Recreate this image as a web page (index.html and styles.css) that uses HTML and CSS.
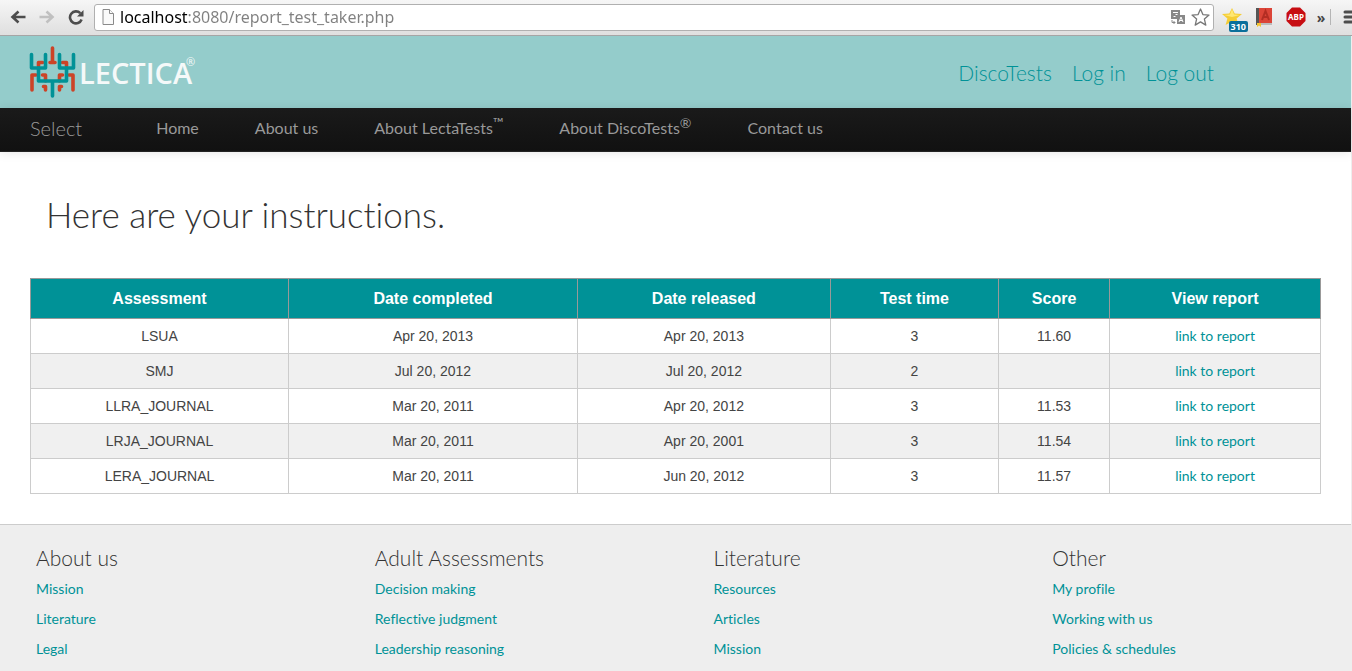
FILE: index.html
```html
<!DOCTYPE html>
<html lang="en">
<head>
  <meta charset="UTF-8" />
  <title>Lectica</title>
  <meta name="viewport" content="width=device-width, initial-scale=1.0" />
  <link rel="stylesheet" href="styles.css">
</head>
<body>
  <div class="toolbar">
    <button class="tool" aria-label="Back">
      <svg width="16" height="16" viewBox="0 0 16 16" fill="none" stroke="#4d4d4d" stroke-width="2.6"><path d="M8.5 2.5L2.5 8l6 5.500M2.500 8H15.500"/></svg>
    </button>
    <button class="tool" aria-label="Forward">
      <svg width="16" height="16" viewBox="0 0 16 16" fill="none" stroke="#c0c0c0" stroke-width="2.6"><path d="M7.500 2.500l6 5.500-6 5.500M13.500 8H.5"/></svg>
    </button>
    <button class="tool" aria-label="Reload">
      <svg width="16" height="16" viewBox="0 0 16 16"><path d="M12.300 4.200A6 6 0 1 0 13.600 10.500" fill="none" stroke="#4d4d4d" stroke-width="2.600"/><path d="M15.500 1v6.500H9z" fill="#4d4d4d"/></svg>
    </button>
    <div class="address">
      <svg width="13" height="16" viewBox="0 0 13 16" fill="#fafafa" stroke="#8a8a8a"><path d="M1 .5h6.500l4 4v11H1z"/><path d="M7.500.5v4h4"/></svg>
      <input type="text" class="url" aria-label="Address" value="localhost:8080/report_test_taker.php">
      <button class="inner" aria-label="Translate">
        <svg width="14" height="14" viewBox="0 0 14 14"><path d="M0 0h9v5H6v4H0z" fill="#888"/><path d="M2 2.500h5M4.500 4.500h2M2.500 6.500h2" stroke="#fff" fill="none"/><path d="M6 5h8v9H6z" fill="#888"/><path d="M8 12l2-5 2 5M8.700 10.500h2.600" stroke="#fff" fill="none"/><path d="M1 10v2.500h3M2.500 11l1.500 1.500L2.500 14" stroke="#888" fill="none"/></svg>
      </button>
      <button class="inner" aria-label="Bookmark">
        <svg width="19" height="18" viewBox="0 0 19 18" fill="#fff" stroke="#777" stroke-width="1.300" stroke-linejoin="round"><path d="M9.500 1l2.400 5.600 6.100.5-4.600 4 1.400 6-5.300-3.200-5.300 3.200 1.400-6-4.600-4 6.100-.5z"/></svg>
      </button>
    </div>
    <button class="ext star" aria-label="Favorites">
      <svg width="20" height="18" viewBox="0 0 20 18"><path d="M10 0l2.700 5.500 7.300.6-5.400 4.500 1.800 6.400L10 13.500 3.600 17l1.800-6.400L0 6.100l7.300-.6z" fill="#f5cd35"/><path d="M10 1l2 5.500 6 .5-8 2-8-2 6-.5z" fill="#ffe773"/></svg>
      <span class="badge">310</span>
    </button>
    <button class="ext" aria-label="Dictionary">
      <svg width="18" height="20" viewBox="0 0 18 20"><path d="M1 1h3v17H1z" fill="#555"/><path d="M4 1h13v15H4z" fill="#db4437"/><path d="M4 16h13v2H4z" fill="#bbb"/><path d="M7 13l3.500-9L14 13M8.200 10h4.600" fill="none" stroke="#b32d23" stroke-width="2"/><path d="M2 16h4v4l-2-1.500L2 20z" fill="#f3c431"/></svg>
    </button>
    <button class="ext" aria-label="AdBlock Plus">
      <svg width="20" height="20" viewBox="0 0 20 20"><path d="M6 .5h8L19.500 6v8L14 19.500H6L.5 14V6z" fill="#c70d12"/><text x="10" y="13" text-anchor="middle" class="abp">ABP</text></svg>
    </button>
    <button class="ext more" aria-label="More extensions">»</button>
    <button class="menu" aria-label="Menu">
      <svg width="16" height="14" viewBox="0 0 16 14" stroke="#4d4d4d" stroke-width="3" stroke-linecap="round"><path d="M2 2h12M2 7h12M2 12h12"/></svg>
    </button>
  </div>

  <div class="page">
    <header class="header">
      <a href="#" class="logo" aria-label="Lectica home">
        <svg width="168" height="54" viewBox="0 0 168 54" fill="none" stroke-width="3.600" stroke-linecap="round" stroke-linejoin="round">
          <g stroke="#cc4327">
            <path d="M23.500 3v14M21 17.500h5"/>
            <path d="M9.500 21v-3.500h4M37.500 21v-3.500h-4"/>
            <path d="M3 45V30h4M44 45V30h-4"/>
            <path d="M13.500 30h3v6M33.500 30h-3v6"/>
            <path d="M16.500 45v-3.500h-2M30.500 45v-3.500h2"/>
          </g>
          <g stroke="#009297">
            <path d="M2.500 9.500v13.500h14V9.500"/>
            <path d="M44.500 9.500v13.500h-14V9.500"/>
            <path d="M9.500 23v13h28V23M23.500 36v15"/>
          </g>
          <text x="50" y="39" class="logo-text">LECTICA</text>
          <text x="157" y="21" class="logo-mark">®</text>
        </svg>
      </a>
      <div class="account">
        <a href="#">DiscoTests</a>
        <a href="#">Log in</a>
        <a href="#">Log out</a>
      </div>
    </header>

    <nav class="nav">
      <a href="#" class="brand">Select</a>
      <a href="#">Home</a>
      <a href="#">About us</a>
      <a href="#">About LectaTests<sup>™</sup></a>
      <a href="#">About DiscoTests<sup>®</sup></a>
      <a href="#">Contact us</a>
    </nav>

    <main class="main">
      <h1>Here are your instructions.</h1>
      <table class="report">
        <colgroup>
          <col class="c-name"><col class="c-completed"><col class="c-released"><col class="c-time"><col class="c-score"><col class="c-view">
        </colgroup>
        <thead>
          <tr><th>Assessment</th><th>Date completed</th><th>Date released</th><th>Test time</th><th>Score</th><th>View report</th></tr>
        </thead>
        <tbody>
          <tr><td>LSUA</td><td>Apr 20, 2013</td><td>Apr 20, 2013</td><td>3</td><td>11.60</td><td><a href="#">link to report</a></td></tr>
          <tr><td>SMJ</td><td>Jul 20, 2012</td><td>Jul 20, 2012</td><td>2</td><td></td><td><a href="#">link to report</a></td></tr>
          <tr><td>LLRA_JOURNAL</td><td>Mar 20, 2011</td><td>Apr 20, 2012</td><td>3</td><td>11.53</td><td><a href="#">link to report</a></td></tr>
          <tr><td>LRJA_JOURNAL</td><td>Mar 20, 2011</td><td>Apr 20, 2001</td><td>3</td><td>11.54</td><td><a href="#">link to report</a></td></tr>
          <tr><td>LERA_JOURNAL</td><td>Mar 20, 2011</td><td>Jun 20, 2012</td><td>3</td><td>11.57</td><td><a href="#">link to report</a></td></tr>
        </tbody>
      </table>
    </main>

    <footer class="footer">
      <div>
        <h2>About us</h2>
        <ul>
          <li><a href="#">Mission</a></li>
          <li><a href="#">Literature</a></li>
          <li><a href="#">Legal</a></li>
        </ul>
      </div>
      <div>
        <h2>Adult Assessments</h2>
        <ul>
          <li><a href="#">Decision making</a></li>
          <li><a href="#">Reflective judgment</a></li>
          <li><a href="#">Leadership reasoning</a></li>
        </ul>
      </div>
      <div>
        <h2>Literature</h2>
        <ul>
          <li><a href="#">Resources</a></li>
          <li><a href="#">Articles</a></li>
          <li><a href="#">Mission</a></li>
        </ul>
      </div>
      <div>
        <h2>Other</h2>
        <ul>
          <li><a href="#">My profile</a></li>
          <li><a href="#">Working with us</a></li>
          <li><a href="#">Policies &amp; schedules</a></li>
        </ul>
      </div>
    </footer>
  </div>
</body>
</html>
```
FILE: styles.css
```css
* {
  box-sizing: border-box;
}

body {
  margin: 0;
  min-height: 100vh;
  display: flex;
  flex-direction: column;
  font-family: Lato, sans-serif;
  font-size: 14px;
  font-variant-ligatures: none;
  color: #333;
  background: #eee;
}

a {
  color: #009297;
  text-decoration: none;
}

button {
  padding: 0;
  border: none;
  background: none;
  display: flex;
  align-items: center;
  justify-content: center;
  flex: none;
}

svg {
  flex: none;
}

/* browser bar */
.toolbar {
  display: flex;
  align-items: center;
  height: 36px;
  padding: 0 0 1px 3px;
  overflow: hidden;
  background: linear-gradient(#f6f6f6, #dfdfdf);
  border-bottom: 1px solid #a5a5a5;
}

.tool {
  width: 29px;
  height: 28px;
}

.address {
  flex: 1;
  display: flex;
  align-items: center;
  height: 27px;
  margin: 0 6px 0 4px;
  padding: 0 3px 0 7px;
  background: #fff;
  border: 1px solid #b0b0b0;
  border-radius: 3px;
}

.url {
  flex: 1;
  min-width: 0;
  margin-left: 5px;
  padding: 0;
  border: none;
  outline: none;
  font: 16px/22px "Noto Sans", sans-serif;
  color: transparent;
  /* host in black, path in grey */
  background: linear-gradient(to right, #000 68px, #808080 68px);
  -webkit-background-clip: text;
  background-clip: text;
}

.inner {
  margin-left: 6px;
}

.ext {
  width: 32px;
  height: 28px;
}

.star {
  position: relative;
  width: 28px;
  padding-right: 4px;
}

.badge {
  position: absolute;
  right: 0;
  bottom: -1px;
  padding: 0 2px;
  background: #0a6f9b;
  border-radius: 2px;
  font: bold 9px/11px "Noto Sans", sans-serif;
  color: #fff;
}

.abp {
  font: bold 8px "Noto Sans", sans-serif;
  fill: #fff;
}

.more {
  width: 18px;
  font: bold 14px "Noto Sans", sans-serif;
  color: #444;
}

.menu {
  width: 22px;
  height: 16px;
  padding-left: 12px;
  justify-content: flex-start;
  border-left: 1px solid #b5b5b5;
}

/* site */
.page {
  flex: 1;
  display: flex;
  flex-direction: column;
  margin-right: 1px;
  background: #fff;
}

.header {
  display: flex;
  justify-content: space-between;
  align-items: center;
  height: 72px;
  padding: 0 137px 0 29px;
  background: #94cccb;
}

.logo svg {
  display: block;
}

.logo-text {
  font: 600 29px "Open Sans", sans-serif;
  fill: #f5f9f9;
  stroke: none;
}

.logo-mark {
  font: 11px "Open Sans", sans-serif;
  fill: #f5f9f9;
  stroke: none;
}

.account {
  display: flex;
  gap: 20px;
  font-size: 21px;
  font-weight: 300;
}

.nav {
  display: flex;
  align-items: center;
  gap: 56px;
  height: 44px;
  padding: 0 30px 3px;
  background: linear-gradient(#1a1a1a, #111);
  border-bottom: 1px solid #222;
  box-shadow: 0 1px 10px rgba(0, 0, 0, 0.1);
}

.nav a {
  font-size: 16px;
  line-height: 20px;
  color: #999;
}

.nav .brand {
  margin-right: 18px;
  font-size: 20px;
  font-weight: 300;
}

.nav sup {
  font-size: 14px;
  line-height: 0;
}

.main {
  padding: 34px 30px 30px;
}

h1 {
  margin: 0 16px 36px;
  font-size: 35px;
  font-weight: 300;
  line-height: 56px;
}

.report {
  width: 100%;
  border-collapse: collapse;
  text-align: center;
  line-height: 20px;
}

.report th {
  height: 40px;
  padding: 0;
  font: bold 16px "Liberation Sans", sans-serif;
  color: #fff;
  background: #009297;
  border: 1px solid #999;
}

.report td {
  height: 35px;
  padding: 0;
  font-family: "Liberation Sans", sans-serif;
  color: #444;
  border: 1px solid #ccc;
}

.report td a {
  font-family: Lato, sans-serif;
}

.report tbody tr:nth-child(even) {
  background: #f0f0f0;
}

.c-name { width: 20%; }
.c-completed { width: 22.4%; }
.c-released { width: 19.6%; }
.c-time { width: 13.05%; }
.c-score { width: 8.6%; }
.c-view { width: 16.35%; }

.footer {
  flex: 1;
  display: grid;
  grid-template-columns: repeat(4, 1fr);
  gap: 70px;
  padding: 18px 30px 0 36px;
  background: #eee;
  border-top: 1px solid #ccc;
}

h2 {
  margin: 0 0 2px;
  font-size: 21px;
  font-weight: 300;
  line-height: 29px;
}

.footer ul {
  margin: 0;
  padding: 0;
  list-style: none;
  line-height: 30px;
}
```
